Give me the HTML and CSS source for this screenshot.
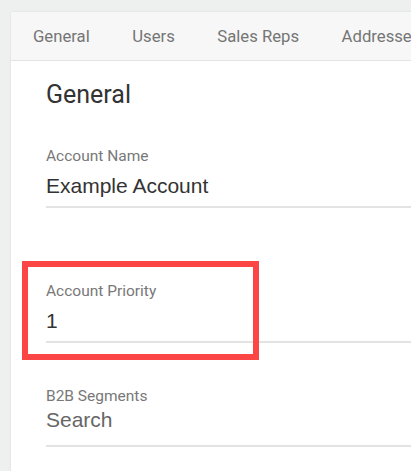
FILE: index.html
```html
<!DOCTYPE html>
<html lang="en">
<head>
<meta charset="utf-8">
<title>Account - General</title>
<link rel="stylesheet" href="styles.css">
</head>
<body>
<div class="card">
  <nav class="tabs">
    <span class="tab">General</span>
    <span class="tab">Users</span>
    <span class="tab">Sales Reps</span>
    <span class="tab">Addresses</span>
  </nav>
  <section class="content">
    <h2 class="heading">General</h2>
    <div class="field">
      <div class="label">Account Name</div>
      <div class="value">Example Account</div>
    </div>
    <div class="field field-priority">
      <div class="label">Account Priority</div>
      <div class="value">1</div>
      <div class="highlight"></div>
    </div>
    <div class="field field-segments">
      <div class="label">B2B Segments</div>
      <div class="value placeholder">Search</div>
    </div>
  </section>
</div>
</body>
</html>
```

FILE: styles.css
```css
html, body {
  margin: 0;
  padding: 0;
  overflow: hidden;
  background: #eef0ef;
  height: 471px;
}
body {
  padding: 12px 0 0 11px;
  font-family: Roboto, "Liberation Sans", Arial, sans-serif;
}
.card {
  width: 520px;
  height: 600px;
  background: #fff;
  box-shadow: 0 0 2px rgba(0,0,0,0.12);
  border-radius: 2px 0 0 0;
}
.tabs {
  display: flex;
  gap: 42.5px;
  height: 48px;
  padding-left: 22px;
  align-items: center;
  background: #f7f7f7;
  border-bottom: 1px solid #e4e4e4;
  white-space: nowrap;
}
.tab {
  font-size: 16.7px;
  color: #757575;
}
.content {
  padding: 18px 0 0 35px;
}
.heading {
  margin: 0;
  font-weight: 400;
  font-size: 25px;
  line-height: 32px;
  color: #333;
}
.field {
  position: relative;
  margin-top: 35px;
  border-bottom: 2px solid #e3e3e3;
  padding-bottom: 5px;
}
.field-priority {
  margin-top: 73px;
}
.field-segments {
  margin-top: 43px;
  padding-bottom: 10px;
}
.label {
  font-size: 15.5px;
  line-height: 20px;
  color: #787878;
}
.value {
  margin-top: 5px;
  font-family: "Liberation Sans", Arial, sans-serif;
  font-size: 21px;
  line-height: 30px;
  color: #333;
}
.placeholder {
  margin-top: -1px;
  color: #666;
}
.highlight {
  position: absolute;
  left: -24px;
  top: -20px;
  width: 225px;
  height: 87px;
  border: 6px solid #fc4545;
}
```
